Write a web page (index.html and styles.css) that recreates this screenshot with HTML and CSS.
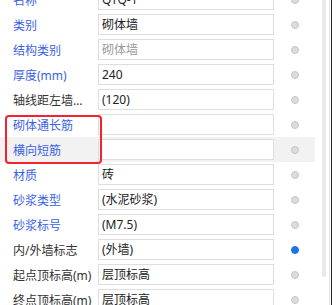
FILE: index.html
```html
<!DOCTYPE html>
<html lang="zh-CN">
<head>
  <meta charset="UTF-8" />
  <title>属性列表</title>
  <link rel="stylesheet" href="styles.css">
</head>
<body>
  <div class="panel">
    <div class="list">
      <div class="row"><span class="label blue">名称</span><span class="box">QTQ-1</span><span class="dot"></span></div>
      <div class="row"><span class="label blue">类别</span><span class="box">砌体墙</span><span class="dot"></span></div>
      <div class="row"><span class="label blue">结构类别</span><span class="box muted">砌体墙</span><span class="dot"></span></div>
      <div class="row"><span class="label blue">厚度(mm)</span><span class="box">240</span><span class="dot"></span></div>
      <div class="row"><span class="label">轴线距左墙皮距离(mm)</span><span class="box">(120)</span><span class="dot"></span></div>
      <div class="row"><span class="label blue">砌体通长筋</span><span class="box"></span><span class="dot"></span></div>
      <div class="row active"><span class="label blue">横向短筋</span><span class="box"></span><span class="dot"></span></div>
      <div class="row"><span class="label blue">材质</span><span class="box">砖</span><span class="dot"></span></div>
      <div class="row"><span class="label blue">砂浆类型</span><span class="box">(水泥砂浆)</span><span class="dot"></span></div>
      <div class="row"><span class="label blue">砂浆标号</span><span class="box">(M7.5)</span><span class="dot"></span></div>
      <div class="row"><span class="label">内/外墙标志</span><span class="box">(外墙)</span><span class="dot on"></span></div>
      <div class="row"><span class="label">起点顶标高(m)</span><span class="box">层顶标高</span><span class="dot"></span></div>
      <div class="row"><span class="label">终点顶标高(m)</span><span class="box">层顶标高</span><span class="dot"></span></div>
      <div class="mark"></div>
    </div>
    <div class="scroll"><div class="thumb"></div></div>
    <div class="edge"></div>
  </div>
</body>
</html>
```

FILE: styles.css
```css
html, body {
  margin: 0;
  background: #fff;
}
body {
  font-family: "Noto Sans", "Noto Sans CJK SC", sans-serif;
  font-size: 12px;
  color: #222;
  width: 336px;
  height: 305px;
  overflow: hidden;
}
.panel {
  display: flex;
  height: 305px;
}
.list {
  position: relative;
  width: 315px;
  margin-top: -13px;
}
.row {
  display: grid;
  grid-template-columns: 85px 176px 41px;
  align-items: center;
  height: 25px;
  padding-left: 13px;
}
.row.active {
  background: #f2f2f2;
}
.label {
  color: #333;
  white-space: nowrap;
  overflow: hidden;
  text-overflow: ellipsis;
  padding-right: 5px;
}
.label.blue {
  color: #3b61e4;
}
.box {
  box-sizing: border-box;
  height: 21px;
  line-height: 19px;
  border: 1px solid #dedede;
  background: #fff;
  padding-left: 3px;
  white-space: nowrap;
  overflow: hidden;
}
.box.muted {
  color: #9a9a9a;
}
.dot {
  justify-self: center;
  width: 6px;
  height: 6px;
  border-radius: 50%;
  background: #dcdcdc;
  border: 1px solid #c6c6c6;
}
.dot.on {
  background: #1a73e8;
  border-color: #1a73e8;
}
.mark {
  position: absolute;
  left: 5px;
  top: 128px;
  width: 93px;
  height: 45px;
  border: 2px solid #f5222d;
  border-radius: 4px;
}
.scroll {
  width: 15px;
  padding-left: 7px;
  box-sizing: border-box;
  border-right: 1px solid #e2e2e2;
}
.thumb {
  width: 4px;
  height: 277px;
  background: #e9e9e9;
  border-radius: 0 0 2px 2px;
}
.edge {
  width: 3px;
  border-right: 1px solid #fff;
  box-sizing: border-box;
  box-shadow: inset -1px 0 0 #222;
}
```
